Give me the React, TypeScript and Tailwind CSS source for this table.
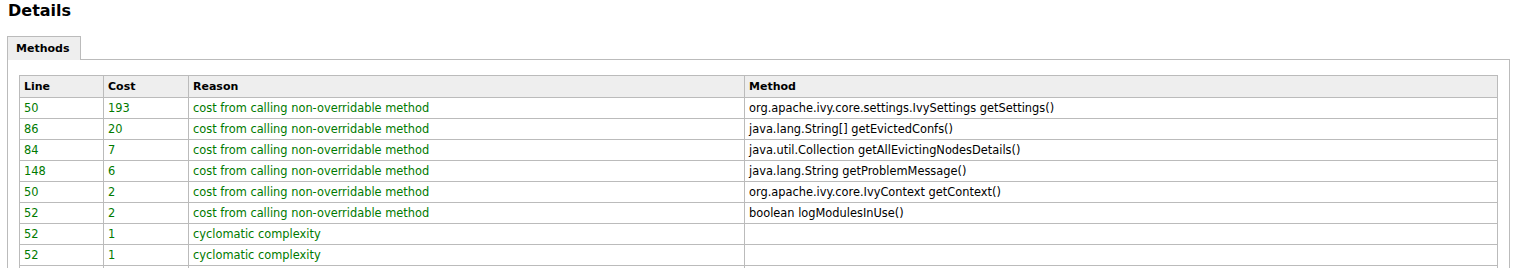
const ROWS = [
  { line: '50', cost: '193', reason: 'cost from calling non-overridable method', method: 'org.apache.ivy.core.settings.IvySettings getSettings()' },
  { line: '86', cost: '20', reason: 'cost from calling non-overridable method', method: 'java.lang.String[] getEvictedConfs()' },
  { line: '84', cost: '7', reason: 'cost from calling non-overridable method', method: 'java.util.Collection getAllEvictingNodesDetails()' },
  { line: '148', cost: '6', reason: 'cost from calling non-overridable method', method: 'java.lang.String getProblemMessage()' },
  { line: '50', cost: '2', reason: 'cost from calling non-overridable method', method: 'org.apache.ivy.core.IvyContext getContext()' },
  { line: '52', cost: '2', reason: 'cost from calling non-overridable method', method: 'boolean logModulesInUse()' },
  { line: '52', cost: '1', reason: 'cyclomatic complexity', method: '' },
  { line: '52', cost: '1', reason: 'cyclomatic complexity', method: '' },
  { line: '', cost: '', reason: '', method: '' },
];

const cell = 'border border-[#bbbbbb] pl-[4px] pr-[5px] py-[4px] h-[21px] leading-[12px] text-left align-middle';

export default function App() {
  return (
    <div className="h-[268px] overflow-hidden bg-white font-['DejaVu_Sans',sans-serif] text-[11px] text-black">
      <h1 className="pl-[8px] pt-[1px] text-[16px] font-bold leading-[20px]">Details</h1>
      <div className="mt-[15px] px-[7px]">
        <div className="flex">
          <div className="relative z-10 -mb-px h-[24px] w-[74px] border border-b-0 border-[#bbbbbb] bg-[#eeeeee] pl-[8px] pt-[5px] font-bold leading-[13px]">
            Methods
          </div>
        </div>
        <div className="mr-[3px] border border-[#bbbbbb] pl-[11px] pr-[11px] pt-[15px] pb-4">
          <table className="w-full table-fixed border-collapse">
            <colgroup>
              <col className="w-[84px]" />
              <col className="w-[85px]" />
              <col className="w-[556px]" />
              <col />
            </colgroup>
            <thead>
              <tr className="bg-[#eeeeee]">
                <th className={cell + ' h-[22px] font-bold'}>Line</th>
                <th className={cell + ' h-[22px] font-bold'}>Cost</th>
                <th className={cell + ' h-[22px] font-bold'}>Reason</th>
                <th className={cell + ' h-[22px] font-bold'}>Method</th>
              </tr>
            </thead>
            <tbody className="text-[11.4px]">
              {ROWS.map((r, i) => (
                <tr key={i}>
                  <td className={cell + ' text-[#007a00]'}>{r.line}</td>
                  <td className={cell + ' text-[#007a00]'}>{r.cost}</td>
                  <td className={cell + ' text-[#007a00]'}>{r.reason}</td>
                  <td className={cell}>{r.method}</td>
                </tr>
              ))}
            </tbody>
          </table>
        </div>
      </div>
    </div>
  );
}
